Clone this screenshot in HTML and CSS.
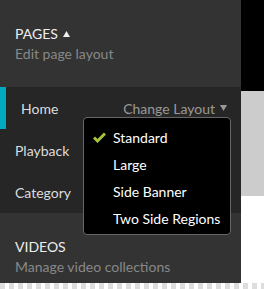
FILE: index.html
```html
<!doctype html>
<html lang="en">
  <head>
    <meta charset="UTF-8" />
    <title>Pages</title>
    <link rel="stylesheet" href="styles.css">
  </head>
  <body>
    <div class="page">
      <div class="top">
        <div class="sidebar">
          <div class="section">
            <div class="section-title">PAGES
              <svg class="caret" width="7" height="6" viewBox="0 0 7 6"><path d="M3.5 0 L7 6 L0 6 Z" fill="#eee"/></svg>
            </div>
            <div class="section-sub">Edit page layout</div>
          </div>
          <div class="menu">
            <div class="menu-item active">
              <span>Home</span>
              <span class="change">Change Layout
                <svg class="caret" width="7" height="6" viewBox="0 0 7 6"><path d="M0 0 L7 0 L3.5 6 Z" fill="#999"/></svg>
              </span>
              <div class="dropdown">
                <div class="option selected">
                  <svg class="check" width="13" height="11" viewBox="0 0 13 11"><path d="M1 5.5 L4.5 9 L12 1.5" stroke="#a3c23a" stroke-width="3" fill="none"/></svg>
                  Standard
                </div>
                <div class="option">Large</div>
                <div class="option">Side Banner</div>
                <div class="option">Two Side Regions</div>
              </div>
            </div>
            <div class="menu-item">Playback</div>
            <div class="menu-item">Category</div>
          </div>
          <div class="section">
            <div class="section-title">VIDEOS</div>
            <div class="section-sub">Manage video collections</div>
          </div>
        </div>
        <div class="main">
          <div class="main-dark"></div>
          <div class="main-grey"></div>
        </div>
      </div>
      <div class="strip"></div>
    </div>
  </body>
</html>
```

FILE: styles.css
```css
body {
  margin: 0;
  padding: 0;
  font-family: Lato, "Open Sans", sans-serif;
  font-size: 14px;
  background-color: #fff;
}

.page {
  display: flex;
  flex-direction: column;
  height: 289px;
}

.top {
  display: flex;
  height: 283px;
}

.sidebar {
  width: 241px;
  background-color: #333;
  display: flex;
  flex-direction: column;
}

.section {
  padding: 24px 15px 23px;
  line-height: 20px;
}

.section-title {
  color: #eee;
  display: flex;
  align-items: center;
  gap: 5px;
}

.section-sub {
  color: #888;
}

.menu {
  background-color: #262626;
}

.menu-item {
  position: relative;
  height: 42px;
  padding: 0 14px 0 15px;
  display: flex;
  align-items: center;
  justify-content: space-between;
  color: #ddd;
}

.menu-item.active {
  border-left: 6px solid #00a8c0;
  padding-left: 15px;
}

.change {
  color: #999;
  display: flex;
  align-items: center;
  gap: 5px;
}

.dropdown {
  position: absolute;
  top: 30px;
  left: 77px;
  width: 146px;
  padding: 6px 0 2px;
  background-color: #000;
  border: 1px solid #666;
  border-radius: 4px;
  z-index: 2;
}

.option {
  height: 27px;
  line-height: 27px;
  padding-left: 29px;
  color: #fff;
  position: relative;
}

.check {
  position: absolute;
  left: 9px;
  top: 8px;
}

.main {
  flex: 1;
  display: flex;
  flex-direction: column;
}

.main-dark {
  height: 91px;
  background-color: #000;
}

.main-grey {
  height: 105px;
  background-color: #ccc;
}

.strip {
  height: 6px;
  background: repeating-linear-gradient(90deg, #ddd 0, #ddd 5px, #fff 5px, #fff 9px);
}
```
